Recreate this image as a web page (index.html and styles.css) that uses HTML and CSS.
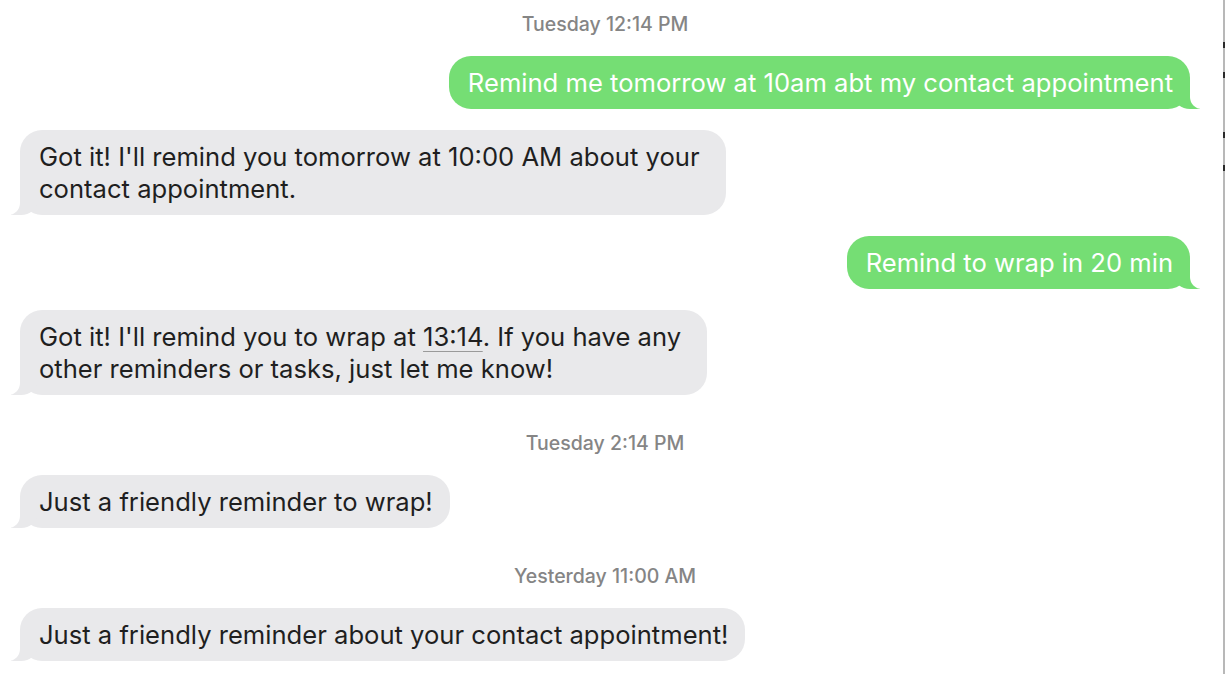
FILE: index.html
```html
<!DOCTYPE html>
<html lang="en">
<head>
<meta charset="utf-8">
<title>Messages</title>
<link rel="stylesheet" href="styles.css">
</head>
<body>
<div class="thread">
  <div class="stamp"><span class="day">Tuesday</span> 12:14 PM</div>
  <div class="row me"><div class="bubble me">Remind me tomorrow at 10am abt my contact appointment</div></div>
  <div class="row them"><div class="bubble them multi">Got it! I'll remind you tomorrow at 10:00 AM about your<br>contact appointment.</div></div>
  <div class="row me"><div class="bubble me">Remind to wrap in 20 min</div></div>
  <div class="row them"><div class="bubble them multi">Got it! I'll remind you to wrap at <span class="link">13:14</span>. If you have any<br>other reminders or tasks, just let me know!</div></div>
  <div class="stamp"><span class="day">Tuesday</span> 2:14 PM</div>
  <div class="row them"><div class="bubble them">Just a friendly reminder to wrap!</div></div>
  <div class="stamp"><span class="day">Yesterday</span> 11:00 AM</div>
  <div class="row them"><div class="bubble them">Just a friendly reminder about your contact appointment!</div></div>
</div>
<div class="edge">
  <span class="tick t1"></span><span class="tick t2"></span><span class="tick t3"></span><span class="tick t4"></span>
</div>
</body>
</html>
```

FILE: styles.css
```css
html, body {
  margin: 0;
  padding: 0;
  background: #ffffff;
  height: 100%;
  overflow: hidden;
}
body {
  font-family: Inter, "Noto Sans", "Liberation Sans", sans-serif;
  position: relative;
}
.thread {
  display: flex;
  flex-direction: column;
  padding: 14px 36px 0 20px;
}
.stamp {
  text-align: center;
  font-size: 19.5px;
  line-height: 20px;
  color: #858585;
  font-weight: 500;
  margin: 17px 0 22px;
}
.stamp:first-child {
  margin-top: 0;
}
.row {
  display: flex;
  margin-bottom: 21px;
}
.row.me { justify-content: flex-end; }
.row.them { justify-content: flex-start; }
.bubble {
  position: relative;
  font-size: 25.6px;
  line-height: 32px;
  padding: 11px 17px 10px 19px;
  border-radius: 22px;
  white-space: nowrap;
}
.bubble.multi {
  padding-right: 26px;
}
.bubble.me {
  background: #75de74;
  color: #ffffff;
}
.bubble.them {
  background: #e9e9eb;
  color: #1f1f1f;
}
.bubble::before,
.bubble::after {
  content: "";
  position: absolute;
  bottom: 0;
  height: 22px;
}
.bubble.them::before {
  left: -9px;
  width: 26px;
  background: #e9e9eb;
  border-bottom-right-radius: 16px 14px;
}
.bubble.them::after {
  left: -30px;
  width: 30px;
  background: #ffffff;
  border-bottom-right-radius: 12px;
}
.bubble.me::before {
  right: -10px;
  width: 26px;
  background: #75de74;
  border-bottom-left-radius: 16px 14px;
}
.bubble.me::after {
  right: -30px;
  width: 30px;
  background: #ffffff;
  border-bottom-left-radius: 12px;
}
.link {
  text-decoration: underline;
  text-decoration-color: #9a9a9a;
  text-decoration-thickness: 1px;
  text-underline-offset: 5px;
}
.edge {
  position: absolute;
  top: 0;
  bottom: 0;
  left: 1223px;
  width: 2px;
  background: #b8b8b8;
}
.tick {
  position: absolute;
  left: 0;
  width: 2px;
  height: 6px;
  background: #2a2a2a;
}
.t1 { top: 42px; }
.t2 { top: 72px; }
.t3 { top: 132px; }
.t4 { top: 165px; }
```
